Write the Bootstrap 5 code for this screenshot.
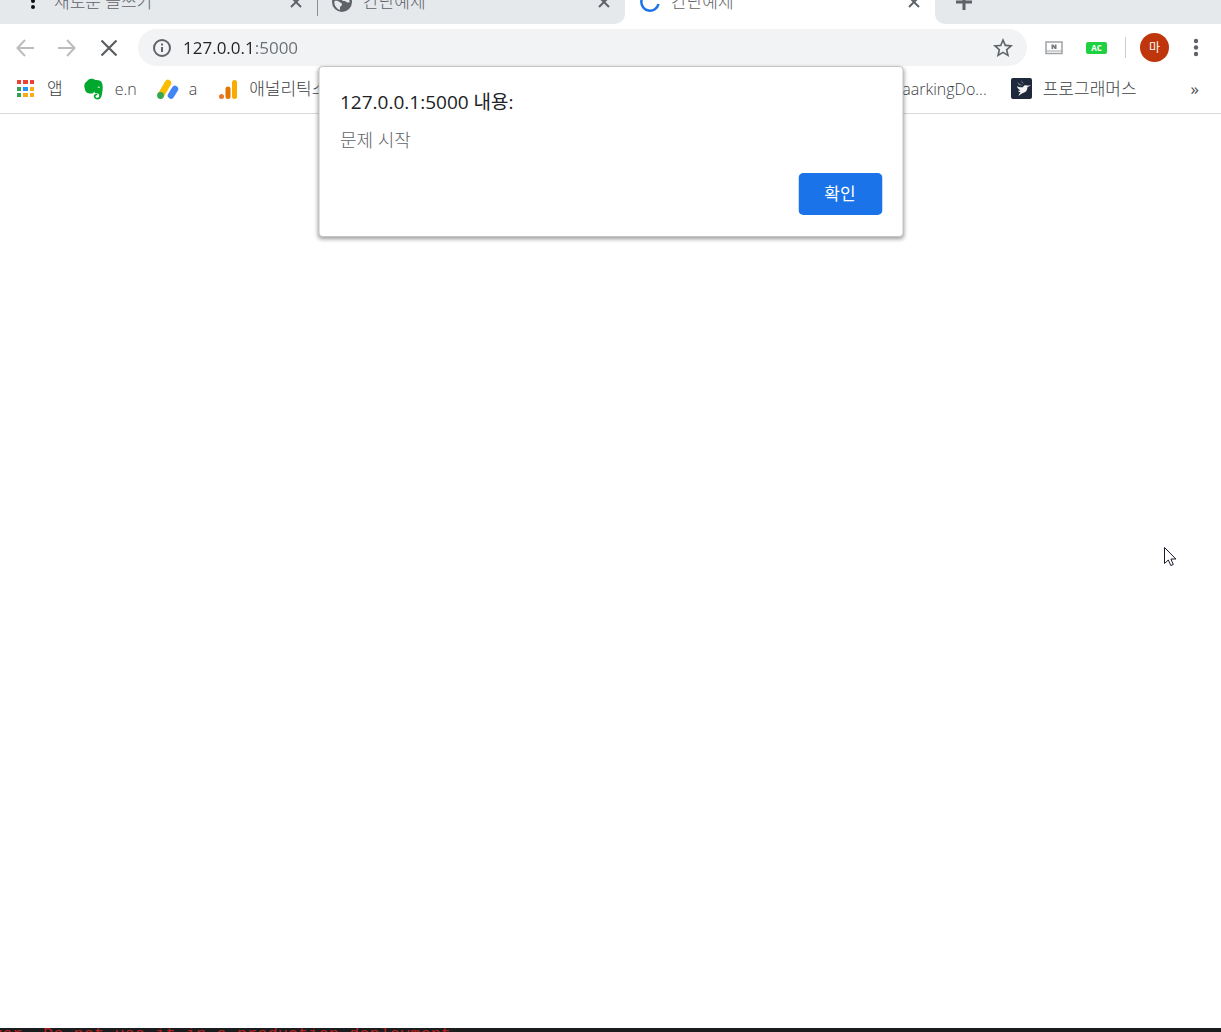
<!DOCTYPE html>
<html lang="ko">
<head>
<meta charset="utf-8">
<meta name="viewport" content="width=device-width, initial-scale=1">
<title>간단예제</title>
<link href="https://cdn.jsdelivr.net/npm/bootstrap@5.3.0/dist/css/bootstrap.min.css" rel="stylesheet">
<style>
body{font-family:"Open Sans","Noto Sans CJK KR",sans-serif;color:#3c4043;font-size:15px;line-height:24px}
.hangul{font-size:17px;font-weight:300}
.icon-btn{width:42px;height:36px;padding:0;border:0;display:flex;align-items:center;justify-content:center;flex:none}
/* tab strip: the upper part of the tabs is above the window edge */
.tabstrip{height:24px}
.strip-part{height:24px;background:#e5e9ec;align-items:flex-end;display:flex}
.strip-left{border-bottom-right-radius:10px;flex:0 0 625px}
.strip-right{border-bottom-left-radius:10px;flex:1 1 0}
.browser-tab{height:44px;display:flex;align-items:center;color:#5f6368}
.tab-first{width:317px;padding-left:23px;gap:11px}
.tab-second{width:307px;padding-left:14px;gap:11px}
.tab-active{flex:0 0 310px;padding-left:15px;gap:11px}
.tab-close{width:20px;height:20px;padding:0;border:0;display:flex;align-items:center;justify-content:center;margin-left:auto;margin-right:11px}
.tab-line{width:1px;height:28px;background:#8c9094;margin-bottom:8px}
/* toolbar */
.toolbar{height:42px;padding:5px 4px 0 4px}
.omnibox{height:37px;background:#f1f3f4;margin:0 6px 0 8px;padding:0 14px;gap:11px}
.omnibox input{border:0;outline:0;padding:0;font-size:17px;min-width:0;color:transparent;
  background:linear-gradient(90deg,#202124 72px,#6b6f73 72px);-webkit-background-clip:text;background-clip:text}
.split-line{width:1px;height:21px;background:#cdd0d3}
.avatar{width:29px;height:29px;background:#bf360c;color:#fff;font-size:12px;border:0;padding:0;line-height:29px;margin:0 6px 0 14px}
/* bookmarks */
.bookmarks{height:48px;border-bottom:1px solid #d7d9db;padding:0 22px 2px 15px}
.bookmark-group{gap:20px}
.bookmarks a{color:#3c4043;text-decoration:none;display:flex;align-items:center;gap:10px;white-space:nowrap}
.latin{font-size:16px;font-weight:300}
.chevron{font-size:17px;color:#4a4e52;border:0;padding:0;background:none;margin-left:54px}
/* alert */
.alert-box{top:66px;width:585px;max-width:100%;background:#fff;border:1px solid #c4c4c4;border-radius:4px;
  box-shadow:0 2px 4px rgba(0,0,0,.4);padding:22px 20px 21px 21px;z-index:10}
.alert-box h1{font-size:19px;line-height:26px;margin:0 0 12px;color:#202124;font-weight:400}
.alert-box p{font-size:18px;font-weight:300;line-height:26px;margin:0 0 20px;color:#5f6368}
.ok-btn{width:84px;height:42px;background:#1a73e8;color:#fff;border-radius:5px;font-size:17px;padding:0}
.ok-btn:hover{background:#1967d2;color:#fff}
.pointer-icon{top:546px;right:44px}
.console-strip{height:4px;background:#1b1c1e;font:17px/18px "Liberation Mono",monospace;color:#b3211f;overflow:hidden}
.console-strip div{margin:-2px 0 0 -8px;white-space:nowrap}
</style>
<script src="https://cdn.jsdelivr.net/npm/bootstrap@5.3.0/dist/js/bootstrap.bundle.min.js"></script>
</head>
<body class="bg-white">
<div class="d-flex flex-column vh-100 position-relative overflow-hidden">
  <header>
    <nav class="tabstrip d-flex align-items-end overflow-hidden bg-white" aria-label="탭">
      <div class="strip-part strip-left">
        <div class="browser-tab tab-first hangul">
          <svg width="20" height="20" fill="#111"><circle cx="10" cy="3" r="2"/><circle cx="10" cy="9" r="2"/><circle cx="10" cy="15" r="2"/></svg>
          <span>새로운 글쓰기</span>
          <button class="tab-close btn" aria-label="닫기"><svg width="12" height="12" stroke="#5f6368" stroke-width="2"><path d="M1 1l10 10M11 1L1 11"/></svg></button>
        </div>
        <div class="tab-line"></div>
        <div class="browser-tab tab-second hangul">
          <svg width="20" height="20" viewBox="2 2 20 20" fill="#5f6368"><path d="M12 2a10 10 0 1 0 0 20 10 10 0 0 0 0-20zM4.500 11c2-.5 4 0 5 1 1 .8 2.500 1 2.500 2.500S10 16 10 17.500V20A8 8 0 0 1 4.500 11zM13 5c2.500 0 5 1.500 6 4l.7 3c-1.500 1-3 .5-4-.5s-3 0-4-1.500 1-2 2-2.500-1-1-.7-2.500z"/></svg>
          <span>간단예제</span>
          <button class="tab-close btn" aria-label="닫기"><svg width="12" height="12" stroke="#5f6368" stroke-width="2"><path d="M1 1l10 10M11 1L1 11"/></svg></button>
        </div>
      </div>
      <div class="browser-tab tab-active hangul">
        <svg width="20" height="20" fill="none" stroke="#1a73e8" stroke-width="2.500"><path d="M10 1.300A8.700 8.700 0 1 0 18.500 12"/></svg>
        <span>간단예제</span>
        <button class="tab-close btn" aria-label="닫기"><svg width="12" height="12" stroke="#5f6368" stroke-width="2"><path d="M1 1l10 10M11 1L1 11"/></svg></button>
      </div>
      <div class="strip-part strip-right">
        <div class="browser-tab ps-2">
          <button class="icon-btn btn" aria-label="새 탭"><svg width="16" height="16" stroke="#5f6368" stroke-width="3"><path d="M8 0v16M0 8h16"/></svg></button>
        </div>
      </div>
    </nav>

    <div class="toolbar d-flex align-items-center">
      <button class="icon-btn btn" aria-label="뒤로"><svg width="18" height="18" fill="none" stroke="#babcbe" stroke-width="2"><path d="M18 9H2M9 1L1.500 9 9 17"/></svg></button>
      <button class="icon-btn btn" aria-label="앞으로"><svg width="18" height="18" fill="none" stroke="#babcbe" stroke-width="2"><path d="M0 9h16M9 1l7.500 8L9 17"/></svg></button>
      <button class="icon-btn btn" aria-label="중지"><svg width="18" height="18" fill="none" stroke="#5a5e62" stroke-width="2.200"><path d="M1.500 1.500l15 15M16.500 1.500l-15 15"/></svg></button>
      <div class="omnibox rounded-pill d-flex align-items-center flex-grow-1">
        <svg class="flex-shrink-0" width="20" height="20" fill="none" stroke="#5f6368" stroke-width="2"><circle cx="10" cy="10" r="8"/><path d="M10 9v5M10 5.500v2"/></svg>
        <input class="flex-grow-1" type="text" value="127.0.0.1:5000" aria-label="주소">
        <button class="btn p-0 border-0 d-flex" aria-label="북마크"><svg width="20" height="20" viewBox="2 2 20 20" fill="#5f6368"><path d="M22 9.240l-7.190-.62L12 2 9.190 8.630 2 9.240l5.460 4.730L5.820 21 12 17.270 18.180 21l-1.630-7.030L22 9.240zM12 15.400l-3.760 2.270 1-4.280-3.320-2.880 4.380-.38L12 6.100l1.710 4.040 4.380.38-3.320 2.880 1 4.280L12 15.400z"/></svg></button>
      </div>
      <button class="icon-btn btn" aria-label="N"><svg width="18" height="14" fill="none" stroke="#a0a3a6" stroke-width="1.500"><path d="M1 1h16v11.500H1z"/><path d="M1 10h16" stroke-width="1"/><path fill="#77797c" stroke="none" d="M6.500 3.500h1.800l1.500 2v-2h1.700v4.500H9.800l-1.600-2.200V8H6.500z"/></svg></button>
      <button class="icon-btn btn" aria-label="AC"><svg width="21" height="12"><rect width="21" height="12" rx="2" fill="#1fd140"/><text x="10.500" y="9" text-anchor="middle" font-size="8" font-weight="700" fill="#fff">AC</text></svg></button>
      <div class="split-line ms-2"></div>
      <button class="avatar rounded-circle flex-shrink-0" aria-label="프로필">마</button>
      <button class="icon-btn btn" aria-label="메뉴"><svg width="6" height="20" fill="#5f6368"><circle cx="3" cy="3" r="2.200"/><circle cx="3" cy="9.500" r="2.200"/><circle cx="3" cy="16" r="2.200"/></svg></button>
    </div>

    <nav class="bookmarks d-flex align-items-center justify-content-between" aria-label="북마크바">
      <div class="bookmark-group d-flex align-items-center">
        <a href="#" class="hangul"><svg width="22" height="22"><g fill="#ea4335"><path d="M2 2h4v4H2zM8 2h5v4H8zM15 2h4v4h-4z"/></g><path fill="#34a058" d="M2 9h4v4H2zM2 15h4v4H2z"/><path fill="#2196f3" d="M8 9h5v4H8z"/><path fill="#fbab15" d="M15 9h4v4h-4zM8 15h5v4H8zM15 15h4v4h-4z"/></svg>앱</a>
        <a href="#" class="latin"><svg width="22" height="22"><path fill="#00a82d" d="M7 1c2-.7 4-.2 5 .9 2 .1 5 .3 6.200 1.600C20 6 20 10 19.300 14c-.5 4-1.500 7.500-4.500 7.500-2.500 0-4-1.200-4-3.200 0-1.800 1.300-2.800 3.500-2.600v1.600c-1.300 0-1.800.3-1.800 1.200s.8 1.300 2 1.300c1.200 0 1.700-1 1.700-2.300 0-1.800-1-2.400-3-2.200-1.200.1-1.700-.5-2-1.800-.5 1.700-1.500 2-3.500 2-3.500 0-5-1-5.800-4.500C1.200 9 1 7 2 5L6 1.200z"/><path d="M14.500 9.500c.5-1.300 2-1.200 2.500.2" fill="#fff"/></svg>e.n</a>
        <a href="#" class="latin"><svg width="22" height="22" stroke-linecap="round"><path d="M11 5L4 17" stroke="#fbbc04" stroke-width="6.500"/><path d="M18 11l-4 6.500" stroke="#4285f4" stroke-width="6.500"/><circle cx="3.500" cy="17.500" r="3.400" fill="#34a853"/></svg>a</a>
        <a href="#" class="hangul"><svg width="22" height="22" stroke-linecap="round"><path d="M17.500 4.500v14" stroke="#f9ab00" stroke-width="5"/><path d="M11 11v7.500" stroke="#e37400" stroke-width="5"/><circle cx="4.500" cy="18.500" r="2.500" fill="#e8762d"/></svg>애널리틱스</a>
      </div>
      <div class="d-flex align-items-center">
        <a href="#" class="latin">aarkingDo...</a>
        <a href="#" class="hangul ms-4"><svg width="22" height="22"><rect width="21" height="21" rx="2" fill="#1e2a3c"/><path fill="#f4f5f7" d="M6 8c2 1.500 4 1.500 6 1.200.7-1.700 2-2.200 3.500-1.700L20 7.600l-3.500 1.400c0 3.500-2 5.500-4.500 6-1.500.8-3 1.500-4.500 3.200.5-2 1-3 2-4-1.500-.3-2-.8-2.500-1.500 1 .2 2 0 2.500-.4C7.500 11.500 6.300 10 6 8z"/><path fill="#7d8793" d="M6 4l6 4-4-1zM10 2l3 4-2-1z"/></svg>프로그래머스</a>
        <button class="chevron" aria-label="더보기">»</button>
      </div>
    </nav>
  </header>

  <main class="flex-grow-1"></main>
  <footer class="console-strip flex-shrink-0"><div>ver. Do not use it in a production deployment.</div></footer>

  <section class="alert-box position-absolute start-50 translate-middle-x" role="dialog" aria-labelledby="alert-title">
    <h1 id="alert-title">127.0.0.1:5000 내용:</h1>
    <p>문제 시작</p>
    <div class="d-flex justify-content-end"><button class="btn ok-btn">확인</button></div>
  </section>
  <svg class="pointer-icon position-absolute" width="14" height="22" fill="#fff" stroke="#1a1a2a" stroke-width="1"><path d="M1.500 1.500v16l3.800-3.500 2.500 5.500 2.500-1-2.400-5.500h5z"/></svg>
</div>
</body>
</html>
